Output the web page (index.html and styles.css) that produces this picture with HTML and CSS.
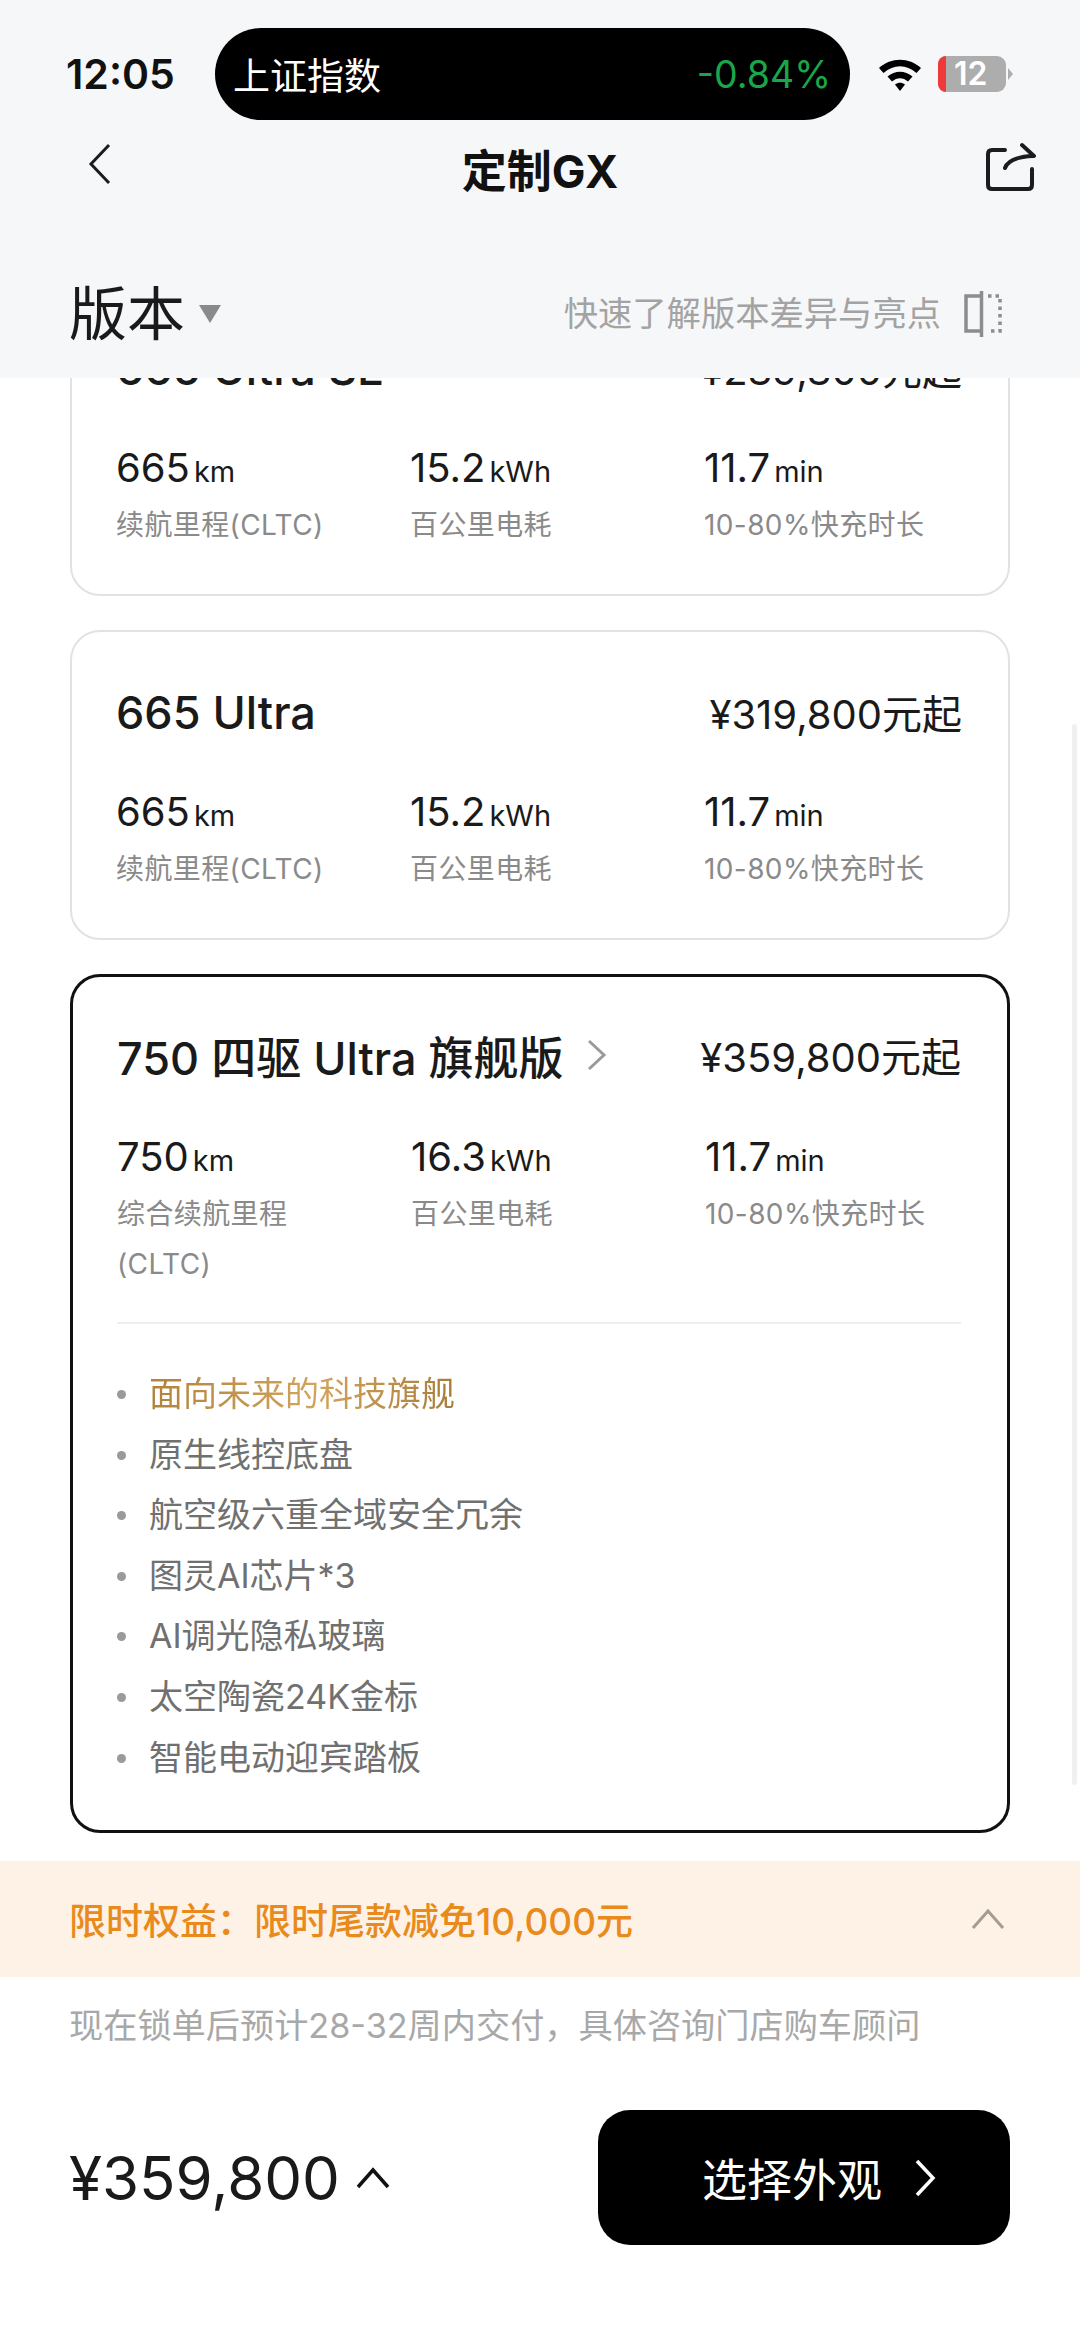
FILE: index.html
```html
<!DOCTYPE html>
<html lang="zh-CN">
<head>
    <meta charset="UTF-8">
    <meta name="viewport" content="width=device-width, initial-scale=1.0">
    <title>定制GX</title>
    <link rel="stylesheet" href="styles.css">
</head>
<body>
    <div class="app">
        <header class="top">
            <div class="status-bar">
                <span class="clock">12:05</span>
                <div class="ticker">
                    <span>上证指数</span>
                    <span class="ticker-value">-0.84%</span>
                </div>
                <svg class="wifi" width="46" height="36" viewBox="0 0 46 36">
                    <path d="M2 12 C14 1 32 1 44 12 L39.500 17 C29 8 17 8 6.500 17 Z" fill="#000"/>
                    <path d="M10.500 20.500 C18 14 28 14 35.500 20.500 L31 25.500 C26 21 20 21 15 25.500 Z" fill="#000"/>
                    <path d="M18 28.500 C21 26 25 26 28 28.500 L23 35 Z" fill="#000"/>
                </svg>
                <div class="battery">
                    <div class="battery-body"><span class="battery-low"></span>12</div>
                    <span class="battery-tip"></span>
                </div>
            </div>

            <div class="nav-bar">
                <svg class="back" width="30" height="44" viewBox="0 0 30 44">
                    <path d="M25 3 L7 22 L25 41" fill="none" stroke="#1c1c1c" stroke-width="3"/>
                </svg>
                <h1>定制GX</h1>
                <svg class="share" width="52" height="52" viewBox="0 0 52 52">
                    <path d="M21 8 H8 Q4 8 4 12 V43 Q4 47 8 47 H44 Q48 47 48 43 V27" fill="none" stroke="#1c1c1c" stroke-width="4" stroke-linecap="round"/>
                    <path d="M21 26 Q25 15 49 14 M38 3 L50 14" fill="none" stroke="#1c1c1c" stroke-width="4" stroke-linecap="round"/>
                </svg>
            </div>

            <div class="section-bar">
                <h2>版本</h2>
                <span class="caret"></span>
                <span class="compare">快速了解版本差异与亮点</span>
                <svg class="compare-icon" width="40" height="46" viewBox="0 0 40 46">
                    <path d="M17 5 H3 V40 H17" fill="none" stroke="#8d8d8d" stroke-width="3.500"/>
                    <path d="M18.500 0 V46" stroke="#8d8d8d" stroke-width="3.500"/>
                    <path d="M25 5 H37 V40 H25" fill="none" stroke="#8d8d8d" stroke-width="3.500" stroke-dasharray="3.500 4"/>
                </svg>
            </div>
        </header>

        <main class="versions">
            <section class="card">
                <div class="card-head">
                    <h3>665 Ultra SE</h3>
                    <span class="price">¥289,800元起</span>
                </div>
                <div class="stats">
                    <div class="stat"><p class="num">665<small>km</small></p><p class="label">续航里程(CLTC)</p></div>
                    <div class="stat"><p class="num">15.2<small>kWh</small></p><p class="label">百公里电耗</p></div>
                    <div class="stat"><p class="num">11.7<small>min</small></p><p class="label">10-80%快充时长</p></div>
                </div>
            </section>

            <section class="card">
                <div class="card-head">
                    <h3>665 Ultra</h3>
                    <span class="price">¥319,800元起</span>
                </div>
                <div class="stats">
                    <div class="stat"><p class="num">665<small>km</small></p><p class="label">续航里程(CLTC)</p></div>
                    <div class="stat"><p class="num">15.2<small>kWh</small></p><p class="label">百公里电耗</p></div>
                    <div class="stat"><p class="num">11.7<small>min</small></p><p class="label">10-80%快充时长</p></div>
                </div>
            </section>

            <section class="card selected">
                <div class="card-head">
                    <h3>750 四驱 Ultra 旗舰版</h3>
                    <svg class="more" width="22" height="32" viewBox="0 0 22 32">
                        <path d="M3 2 L18 16 L3 30" fill="none" stroke="#9a9a9a" stroke-width="3"/>
                    </svg>
                    <span class="price">¥359,800元起</span>
                </div>
                <div class="stats">
                    <div class="stat"><p class="num">750<small>km</small></p><p class="label">综合续航里程<br>(CLTC)</p></div>
                    <div class="stat"><p class="num">16.3<small>kWh</small></p><p class="label">百公里电耗</p></div>
                    <div class="stat"><p class="num">11.7<small>min</small></p><p class="label">10-80%快充时长</p></div>
                </div>
                <ul class="features">
                    <li><span class="gold">面向未来的科技旗舰</span></li>
                    <li>原生线控底盘</li>
                    <li>航空级六重全域安全冗余</li>
                    <li>图灵AI芯片*3</li>
                    <li>AI调光隐私玻璃</li>
                    <li>太空陶瓷24K金标</li>
                    <li>智能电动迎宾踏板</li>
                </ul>
            </section>
            <div class="scroll-thumb"></div>
        </main>

        <div class="offer">
            <span>限时权益：限时尾款减免10,000元</span>
            <svg width="34" height="22" viewBox="0 0 34 22">
                <path d="M2 20 L17 3 L32 20" fill="none" stroke="#a39c92" stroke-width="3"/>
            </svg>
        </div>

        <p class="delivery">现在锁单后预计28-32周内交付，具体咨询门店购车顾问</p>

        <footer class="buy">
            <span class="total">¥359,800</span>
            <svg class="total-arrow" width="34" height="24" viewBox="0 0 34 24">
                <path d="M2 21 L17 4 L32 21" fill="none" stroke="#111" stroke-width="3.500"/>
            </svg>
            <button class="next">选择外观
                <svg width="22" height="40" viewBox="0 0 22 40">
                    <path d="M3 3 L19 20 L3 37" fill="none" stroke="#fff" stroke-width="3.500"/>
                </svg>
            </button>
        </footer>
    </div>
</body>
</html>
```

FILE: styles.css
```css
* {
    box-sizing: border-box;
}
body {
    margin: 0;
    font-family: Inter, "Noto Sans CJK SC", sans-serif;
    color: #1a1a1a;
    background: #fff;
}
h1, h2, h3, p, ul {
    margin: 0;
    padding: 0;
}
.app {
    width: 1080px;
    height: 2341px;
    display: flex;
    flex-direction: column;
    overflow: hidden;
}

/* top area */
.top {
    height: 378px;
    flex-shrink: 0;
    background: #f6f7f9;
    position: relative;
    z-index: 2;
}
.status-bar {
    height: 120px;
    padding: 28px 0 0 66px;
    display: flex;
    align-items: center;
}
.clock {
    width: 149px;
    font-size: 41px;
    font-weight: 600;
    color: #111;
}
.ticker {
    width: 635px;
    height: 92px;
    padding: 0 19px 0 18px;
    border-radius: 46px;
    background: #000;
    color: #fff;
    font-size: 37px;
    display: flex;
    justify-content: space-between;
    align-items: center;
}
.ticker-value {
    color: #1aa64a;
    font-size: 37.500px;
}
.wifi {
    margin-left: 27px;
}
.battery {
    margin-left: 15px;
    display: flex;
    align-items: center;
}
.battery-body {
    width: 68px;
    height: 36px;
    border-radius: 9px;
    background: #adadad;
    color: #fff;
    font-size: 32px;
    font-weight: 600;
    line-height: 36px;
    display: flex;
    gap: 8px;
}
.battery-low {
    width: 8px;
    border-radius: 9px 0 0 9px;
    background: #ee3a3a;
}
.battery-tip {
    margin-left: 2px;
    border-left: 5px solid #adadad;
    border-top: 6px solid transparent;
    border-bottom: 6px solid transparent;
}
.nav-bar {
    height: 100px;
    padding: 0 44px;
    display: grid;
    grid-template-columns: 1fr auto 1fr;
    align-items: center;
}
.nav-bar h1 {
    font-size: 45px;
    font-weight: 700;
    color: #111;
    margin-top: -4px;
}
.back {
    margin: -12px 0 0 40px;
}
.share {
    margin-top: -4px;
    justify-self: end;
}
.section-bar {
    height: 158px;
    padding: 60px 77px 30px 69px;
    display: flex;
    align-items: center;
}
.section-bar h2 {
    font-size: 58px;
    font-weight: 400;
    line-height: 78px;
}
.caret {
    margin-left: 14px;
    border-top: 18px solid #8a8a8a;
    border-left: 11px solid transparent;
    border-right: 11px solid transparent;
}
.compare {
    margin: 0 0 6px auto;
    font-size: 34.300px;
    color: #a3a3a3;
}
.compare-icon {
    margin-left: 22px;
}

/* version cards */
.versions {
    flex: 1;
    min-height: 0;
    overflow: hidden;
    padding: 0 70px 28px;
    display: flex;
    flex-direction: column;
    justify-content: flex-end;
    gap: 34px;
    position: relative;
}
.card {
    flex-shrink: 0;
    height: 310px;
    padding: 48px 46px 0 44px;
    border: 2px solid #e2e2e2;
    border-radius: 30px;
    background: #fff;
}
.card.selected {
    height: 859px;
    padding-top: 46px;
    border: 3px solid #111;
}
.card-head {
    height: 64px;
    display: flex;
    align-items: center;
}
.card-head h3 {
    font-size: 45px;
    font-weight: 500;
}
.more {
    margin-left: 22px;
}
.price {
    margin-left: auto;
    font-size: 40px;
    font-weight: 400;
}
.stats {
    margin-top: 44px;
    display: grid;
    grid-template-columns: 294px 294px 1fr;
}
.selected .stats {
    margin-top: 46px;
}
.num {
    font-size: 40px;
    line-height: 48px;
}
.num small {
    margin-left: 4px;
    font-size: 29px;
}
.label {
    margin-top: 4px;
    font-size: 28px;
    line-height: 50px;
    letter-spacing: 0.400px;
    color: #8a8a8a;
}
.features {
    margin-top: 33px;
    padding-top: 40px;
    border-top: 2px solid #eeeeee;
    list-style: none;
}
.features li {
    height: 60.600px;
    padding-left: 32px;
    font-size: 34px;
    line-height: 60.600px;
    color: #707070;
    position: relative;
}
.features li::before {
    content: "";
    position: absolute;
    left: 0;
    top: 26px;
    width: 9px;
    height: 9px;
    border-radius: 50%;
    background: #9a9a9a;
}
.gold {
    display: inline-block;
    background: linear-gradient(90deg, #b0823c, #d2a45c 55%, #a87c3a);
    -webkit-background-clip: text;
    background-clip: text;
    color: transparent;
}
.scroll-thumb {
    position: absolute;
    right: 3px;
    top: 346px;
    width: 5px;
    height: 1061px;
    border-radius: 3px;
    background: #f0f0f0;
}

/* bottom */
.offer {
    height: 116px;
    flex-shrink: 0;
    padding: 0 75px 0 69px;
    background: #fef1e5;
    color: #e88a1c;
    font-size: 37px;
    font-weight: 500;
    display: flex;
    justify-content: space-between;
    align-items: center;
}
.delivery {
    padding: 24px 69px 0;
    font-size: 34.200px;
    line-height: 50px;
    color: #a8a8a8;
}
.buy {
    margin-top: 59px;
    padding: 0 70px 96px 69px;
    display: flex;
    align-items: center;
}
.total {
    font-size: 60px;
    color: #1a1a1a;
}
.total-arrow {
    margin-left: 16px;
}
.next {
    width: 412px;
    height: 135px;
    margin-left: auto;
    padding-left: 104px;
    border: none;
    border-radius: 32px;
    background: #000;
    color: #fff;
    font-family: inherit;
    font-size: 45px;
    display: flex;
    align-items: center;
    gap: 32px;
}
```
